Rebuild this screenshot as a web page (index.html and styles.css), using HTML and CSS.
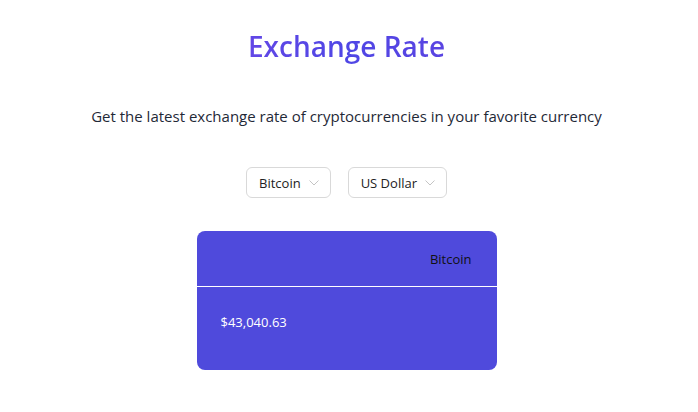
FILE: index.html
```html
<!DOCTYPE html>
<html>
<head>
<meta charset="utf-8">
<link rel="stylesheet" href="styles.css">
</head>
<body>
<main class="page">
  <h1 class="title">Exchange Rate</h1>
  <p class="subtitle">Get the latest exchange rate of cryptocurrencies in your favorite currency</p>
  <div class="selects">
    <div class="select">Bitcoin <svg class="chev" width="10" height="6" viewBox="0 0 10 6"><path d="M0.5 0.5 L5 5 L9.5 0.5" fill="none" stroke="#c4c4c4" stroke-width="1"/></svg></div>
    <div class="select">US Dollar <svg class="chev" width="10" height="6" viewBox="0 0 10 6"><path d="M0.5 0.5 L5 5 L9.5 0.5" fill="none" stroke="#c4c4c4" stroke-width="1"/></svg></div>
  </div>
  <div class="card">
    <div class="card-head">Bitcoin</div>
    <div class="card-body">$43,040.63</div>
  </div>
</main>
</body>
</html>
```
FILE: styles.css
```css
html, body { margin: 0; padding: 0; background: #fff; }
body { font-family: "Open Sans", "Noto Sans", sans-serif; color: #1f2937; }
.page { display: flex; flex-direction: column; align-items: center; padding-top: 26px; padding-right: 5px; }
.title {
  margin: 0; font-size: 28px; font-weight: 600; line-height: 40px;
  background: linear-gradient(90deg, #6247e6, #4f46e5 50%, #5a44e2);
  -webkit-background-clip: text; background-clip: text; color: transparent;
}
.subtitle { margin: 40px 0 0; font-size: 15px; line-height: 20px; color: #1f2937; }
.selects { display: flex; gap: 17px; margin-top: 41px; }
.select {
  display: flex; align-items: center; gap: 8px; height: 29px; padding: 0 11px 0 12px;
  border: 1px solid #d9d9d9; border-radius: 6px; font-size: 13px; color: #222;
}
.chev { display: block; }
.card {
  margin-top: 33px; width: 300px; background: #4f4adc; border-radius: 8px; overflow: hidden;
}
.card-head {
  height: 56px; display: flex; align-items: center; justify-content: flex-end;
  padding-right: 25px; font-size: 13px; color: #111; border-bottom: 1px solid #fff; box-sizing: border-box; padding-top: 1px;
}
.card-body { height: 83px; display: flex; align-items: center; padding-left: 24px; font-size: 13px; color: #fff; padding-bottom: 14px; box-sizing: border-box; }
```
